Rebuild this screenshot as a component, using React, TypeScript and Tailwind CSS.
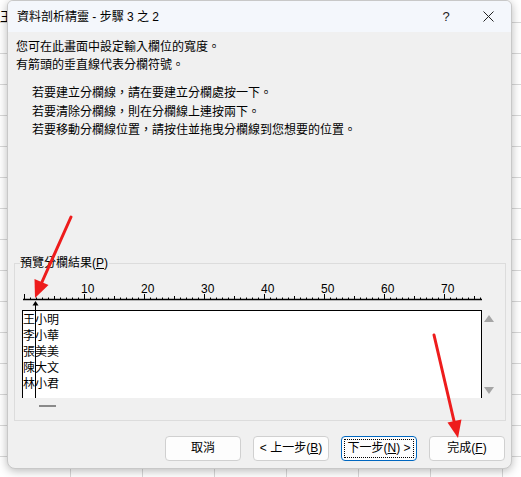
import React from "react";

const rows = ["王小明", "李小華", "張美美", "陳大文", "林小君"];

const font = "font-['Liberation_Sans','Noto_Sans_CJK_TC',sans-serif]";

function Ruler() {
  const ticks = [];
  for (let i = 0; i <= 76; i++) {
    const x = 2 + 6 * i;
    const top = i % 10 === 0 ? 14 : i % 5 === 0 ? 16 : 17.5;
    ticks.push(<line key={i} x1={x + 0.5} y1={top} x2={x + 0.5} y2={19} stroke="#000" strokeWidth={1} />);
  }
  const labels = [10, 20, 30, 40, 50, 60, 70];
  return (
    <svg width={462} height={30} className="block">
      <line x1={1} y1={19.5} x2={460} y2={19.5} stroke="#000" strokeWidth={1.5} />
      {ticks}
      {labels.map((n) => (
        <text
          key={n}
          x={2 + 6 * n - 3}
          y={13}
          fontSize={12}
          fontFamily="Liberation Sans, sans-serif"
          fill="#000"
        >
          {n}
        </text>
      ))}
      <polygon points="13.5,21 10.5,25.5 16.5,25.5" fill="#000" />
    </svg>
  );
}

function Btn({ children, focused }: { children: React.ReactNode; focused?: boolean }) {
  return (
    <button
      className={
        focused
          ? "w-[76px] h-[25px] rounded-[4px] border border-[#0067c0] bg-[#fdfdfd] p-[2px] text-[12px] text-black"
          : "w-[76px] h-[25px] rounded-[4px] border border-[#d0d0d0] bg-[#fdfdfd] text-[12px] text-black"
      }
    >
      {focused ? (
        <span className="flex h-full w-full items-center justify-center border border-dotted border-black">
          {children}
        </span>
      ) : (
        children
      )}
    </button>
  );
}

function RedArrow({ line, head }: { line: [number, number, number, number]; head: string }) {
  return (
    <g>
      <line x1={line[0]} y1={line[1]} x2={line[2]} y2={line[3]} stroke="#ee1c1c" strokeWidth={3} strokeLinecap="round" />
      <polygon points={head} fill="#ee1c1c" />
    </g>
  );
}

export default function App() {
  return (
    <div
      className={`relative w-[521px] h-[477px] overflow-hidden bg-white bg-[linear-gradient(to_right,#d8d8d8_1px,transparent_1px),linear-gradient(to_bottom,#d8d8d8_1px,transparent_1px)] bg-[size:72px_31px] bg-[position:-2px_22px] ${font}`}
    >
      <div className="absolute left-0 top-[9px] text-[13px] leading-[16px] text-black">王</div>

      <div className="relative ml-[7px] w-[505px] h-[469px] rounded-b-[8px] rounded-t-[6px] bg-[#f0f0f0] shadow-[0_2px_10px_rgba(0,0,0,0.28)] border border-[#c8c8c8] flex flex-col overflow-hidden">
        <div className="h-[31px] flex items-center bg-[#f4f7fc] shrink-0">
          <div className="flex-1 pl-[9px] text-[12px] text-black">資料剖析精靈 - 步驟 3 之 2</div>
          <div className="w-[38px] h-full flex items-center justify-center text-[13px] text-[#222]">?</div>
          <div className="w-[46px] h-full flex items-center justify-center">
            <svg width={11} height={11} viewBox="0 0 11 11">
              <path d="M0.5 0.5 L10.5 10.5 M10.5 0.5 L0.5 10.5" stroke="#222" strokeWidth={1} />
            </svg>
          </div>
        </div>

        <div className="pt-[6px] pl-[8px] text-[12px] leading-[18px] text-black">
          <p>您可在此畫面中設定輸入欄位的寬度。</p>
          <p>有箭頭的垂直線代表分欄符號。</p>
          <div className="mt-[10px] pl-[16px] leading-[18.5px]">
            <p>若要建立分欄線，請在要建立分欄處按一下。</p>
            <p>若要清除分欄線，則在分欄線上連按兩下。</p>
            <p>若要移動分欄線位置，請按住並拖曳分欄線到您想要的位置。</p>
          </div>
        </div>

        <div className="relative mt-[123px] ml-[6px] w-[492px] h-[158px] border border-[#dcdcdc] shrink-0">
          <div className="absolute -top-[9px] left-[5px] bg-[#f0f0f0] pr-[1px] text-[12px] leading-[16px] text-black">
            預覽分欄結果(<span className="underline">P</span>)
          </div>
          <div className="relative mt-[16px] ml-[7px]">
            <Ruler />
            <div className="flex">
              <div className="w-[460px] h-[88px] border-l border-t border-r border-black bg-white text-[12px] leading-[16px] text-black font-['Noto_Sans_CJK_TC',sans-serif]">
                {rows.map((r) => (
                  <div key={r}>{r}</div>
                ))}
              </div>
              <div className="flex flex-col justify-between pt-[5px] pb-[4px] ml-[2px]">
                <svg width={10} height={7} viewBox="0 0 10 7">
                  <polygon points="5,0 10,7 0,7" fill="#a5a5a5" />
                </svg>
                <svg width={10} height={7} viewBox="0 0 10 7">
                  <polygon points="0,0 10,0 5,7" fill="#a5a5a5" />
                </svg>
              </div>
            </div>
            <div className="mt-[7px] ml-[17px] w-[17px] h-[2px] bg-[#8a8a8a]" />
            <div className="absolute left-[13px] top-[25px] w-[1px] h-[93px] bg-black" />
          </div>
        </div>

        <div className="mt-[15px] pr-[6px] flex justify-end gap-3">
          <Btn>取消</Btn>
          <Btn>
            &lt; 上一步(<span className="underline">B</span>)
          </Btn>
          <Btn focused>
            下一步(<span className="underline">N</span>) &gt;
          </Btn>
          <Btn>
            完成(<span className="underline">F</span>)
          </Btn>
        </div>
      </div>

      <svg className="absolute left-0 top-0 pointer-events-none" width={521} height={477}>
        <RedArrow line={[71, 217, 42, 282]} head="35,298 48.5,285 34.5,279" />
        <RedArrow line={[434, 335, 454, 421]} head="458,438 461.5,419.5 447.5,422.5" />
      </svg>
    </div>
  );
}
